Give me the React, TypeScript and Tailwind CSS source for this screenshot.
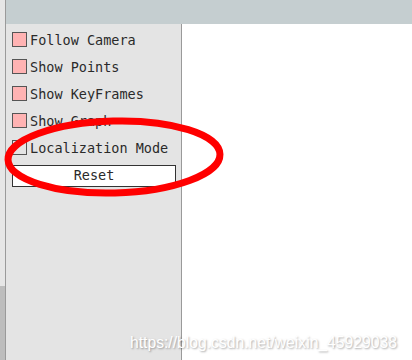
import React from 'react';

const items = [
  { label: 'Follow Camera', on: true },
  { label: 'Show Points', on: true },
  { label: 'Show KeyFrames', on: true },
  { label: 'Show Graph', on: true },
  { label: 'Localization Mode', on: false },
];

const mono = { fontFamily: '"DejaVu Sans Mono", monospace' };

export default function App() {
  return (
    <div className="relative flex w-[412px] h-[360px] overflow-hidden bg-white">
      {/* window behind, peeking out on the left */}
      <div className="flex flex-col w-[6px] h-full border-r border-[#9a9a9a]">
        <div className="h-[286px] bg-[#e6e6e6]" />
        <div className="flex-1 bg-[#bdbdbd]" />
      </div>

      <div className="flex flex-col flex-1">
        <div className="h-[24px] bg-[#c5ced0]" />
        <div className="flex flex-1">
          {/* control panel */}
          <div className="flex flex-col w-[176px] bg-[#e4e4e4] border-r border-[#9a9a9a] pl-[6px] pr-[5px] pt-[8px]" style={mono}>
            {items.map((it) => (
              <div key={it.label} className="flex items-center h-[15px] mb-[12px]">
                <span
                  className={`shrink-0 w-[15px] h-[15px] border border-[#555] ${it.on ? 'bg-[#ffb3b3]' : 'bg-[#e4e4e4]'}`}
                />
                <span className="ml-[3px] mt-[2px] text-[13.5px] leading-none text-[#2a2a2a]">{it.label}</span>
              </div>
            ))}
            <button className="-mt-[2px] h-[22px] w-[164px] bg-white border border-[#333] text-[13.5px] leading-none text-[#2a2a2a]" style={mono}>
              Reset
            </button>
          </div>
          <div className="flex-1 bg-white" />
        </div>
      </div>

      {/* red annotation ellipse */}
      <svg className="absolute left-0 top-0" width="412" height="360">
        <ellipse cx="114" cy="157" rx="106" ry="36" fill="none" stroke="#ff0000" strokeWidth="7" transform="rotate(-1.5 114 157)" />
      </svg>

      {/* watermark */}
      <div
        className="absolute left-[130px] top-[331px] text-[15.7px] text-white"
        style={{ fontFamily: '"Liberation Sans", Arial, sans-serif', textShadow: '1px 1px 2px rgba(0,0,0,0.35)' }}
      >
        https://blog.csdn.net/weixin_45929038
      </div>
    </div>
  );
}
